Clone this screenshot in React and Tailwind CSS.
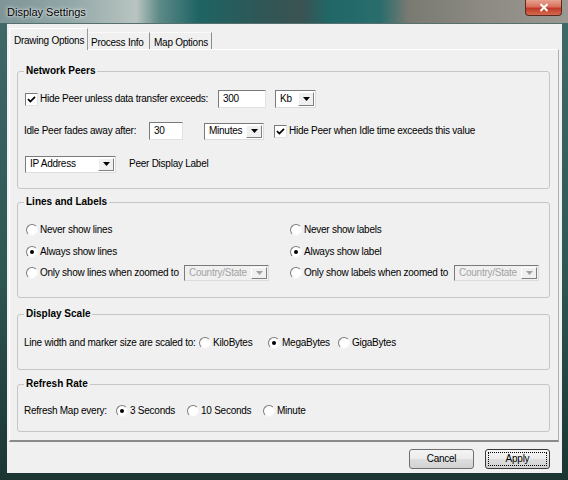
import React from "react";

const Check = () => (
  <span className="w-[13px] h-[13px] bg-white border border-t-[#7a7a7a] border-l-[#7a7a7a] border-r-[#e2e2e2] border-b-[#e2e2e2] flex items-center justify-center shrink-0">
    <svg width="9" height="9" viewBox="0 0 9 9">
      <path d="M1 4.2 L3.4 6.6 L8 1.8" stroke="#000" strokeWidth="1.7" fill="none" />
    </svg>
  </span>
);

const Radio = ({ on }) => (
  <span className="w-[12px] h-[12px] rounded-full bg-white border border-t-[#7a7a7a] border-l-[#7a7a7a] border-r-[#f4f4f4] border-b-[#f4f4f4] flex items-center justify-center shrink-0">
    {on && <span className="w-[4px] h-[4px] rounded-full bg-black" />}
  </span>
);

const Arrow = ({ disabled }) => (
  <span className="w-[16px] shrink-0 bg-[#f0f0f0] border border-t-white border-l-white border-r-[#808080] border-b-[#808080] flex items-center justify-center">
    <svg width="7" height="4" viewBox="0 0 7 4">
      <path d="M0 0 H7 L3.5 4 Z" fill={disabled ? "#a0a0a0" : "#000"} />
    </svg>
  </span>
);

const Select = ({ cls, text, disabled }) => (
  <div
    className={
      "flex items-stretch border border-t-[#7a7a7a] border-l-[#7a7a7a] border-r-[#dcdcdc] border-b-[#dcdcdc] p-[1px] shrink-0 " +
      (disabled ? "bg-[#f0f0f0] text-[#a3a3a3] " : "bg-white ") +
      cls
    }
  >
    <span className="flex-1 flex items-center pl-[3px] overflow-hidden whitespace-nowrap">{text}</span>
    <Arrow disabled={disabled} />
  </div>
);

const Input = ({ cls, text }) => (
  <div
    className={
      "bg-white border border-t-[#7a7a7a] border-l-[#7a7a7a] border-r-[#e2e2e2] border-b-[#e2e2e2] flex items-center pl-[4px] shrink-0 " +
      cls
    }
  >
    {text}
  </div>
);

const Group = ({ title, cls, children }) => (
  <div className={"relative ml-[7px] w-[533px] border border-[#c6c6c6] rounded-[3px] " + cls}>
    <span className="absolute left-[6px] -top-[7px] bg-[#f0f0f0] px-[2px] font-bold leading-[12px] tracking-normal">
      {title}
    </span>
    {children}
  </div>
);

const RadioItem = ({ on, label, cls }) => (
  <div className={"flex items-center gap-[2px] shrink-0 " + (cls || "")}>
    <Radio on={on} />
    <span className="whitespace-nowrap">{label}</span>
  </div>
);

export default function App() {
  return (
    <div className="w-[568px] h-[480px] relative overflow-hidden bg-[linear-gradient(180deg,#3f6b68_0%,#2f5855_55%,#1b3533_100%)] text-black font-['Liberation_Sans',Arial,sans-serif]">
      {/* title bar */}
      <div className="h-[23px] flex items-center pl-[7px] bg-[linear-gradient(90deg,#7e9597_0%,#91a7a7_12%,#b9c4c0_24%,#5e8a88_28%,#1f6464_35%,#2f5656_46%,#3b5252_53%,#206767_58%,#2a6d6d_67%,#7a7a72_72%,#8c8a82_85%,#9a9890_100%)]">
        <span className="text-[11px] leading-[14px] [text-shadow:0_0_5px_rgba(255,255,255,0.9),0_0_2px_rgba(255,255,255,0.9)]">
          Display Settings
        </span>
      </div>
      <div className="absolute top-0 left-[525px] w-[37px] h-[16px] rounded-b-[4px] border border-t-0 border-[#5a2a22] bg-[linear-gradient(180deg,#e8a292_0%,#d9705c_45%,#c03a26_55%,#d36a4e_100%)] flex items-center justify-center">
        <svg width="10" height="9" viewBox="0 0 10 9">
          <path d="M1.5 1 L8.5 8 M8.5 1 L1.5 8" stroke="#fff" strokeWidth="2" />
        </svg>
      </div>

      {/* client area */}
      <div className="ml-[7px] w-[555px] h-[450px] bg-[#f0f0f0] border-t border-[#55706f] flex flex-col text-[10px] leading-[12px] tracking-[-0.25px]">
        {/* tab strip */}
        <div className="flex items-end pl-[2px] pt-[3px] h-[25px]">
          <div className="h-[22px] w-[79px] -mb-[1px] relative z-10 bg-[#f0f0f0] border-t border-l border-white border-r border-r-[#9a9a9a] pl-[4px] pt-[6px]">
            Drawing Options
          </div>
          <div className="h-[17px] w-[62px] border-t border-t-[#fafafa] border-r border-r-[#8a8a8a] pl-[3px] pt-[4px]">
            Process Info
          </div>
          <div className="h-[17px] w-[62px] border-t border-t-[#fafafa] border-r border-r-[#8a8a8a] pl-[4px] pt-[4px]">
            Map Options
          </div>
        </div>

        {/* tab panel */}
        <div className="ml-[2px] w-[550px] h-[393px] border-t border-l border-white border-r border-r-[#b0b0b0] border-b-2 border-b-[#8a8a8a] flex flex-col">
          <Group title="Network Peers" cls="mt-[21px] h-[118px] pt-[18px]">
            <div className="h-[18px] flex items-center pl-[7px]">
              <div className="w-[193px] flex items-center gap-[2px] shrink-0">
                <Check />
                <span className="whitespace-nowrap">Hide Peer unless data transfer exceeds:</span>
              </div>
              <Input cls="w-[48px] h-[18px]" text="300" />
              <Select cls="ml-[9px] w-[41px] h-[18px]" text="Kb" />
            </div>
            <div className="mt-[14px] h-[18px] flex items-center pl-[6px]">
              <span className="w-[125px] shrink-0 whitespace-nowrap">Idle Peer fades away after:</span>
              <Input cls="w-[34px] h-[18px]" text="30" />
              <Select cls="ml-[21px] w-[60px] h-[17px]" text="Minutes" />
              <div className="ml-[10px] flex items-center gap-[2px]">
                <Check />
                <span className="whitespace-nowrap">Hide Peer when Idle time exceeds this value</span>
              </div>
            </div>
            <div className="mt-[15px] h-[18px] flex items-center pl-[7px]">
              <Select cls="w-[91px] h-[17px]" text="IP Address" />
              <span className="ml-[13px] whitespace-nowrap">Peer Display Label</span>
            </div>
          </Group>

          <Group title="Lines and Labels" cls="mt-[13px] h-[96px] pt-[18px] flex pl-[8px]">
            <div className="w-[264px] shrink-0 flex flex-col">
              <div className="h-[18px] flex items-center">
                <RadioItem label="Never show lines" />
              </div>
              <div className="mt-[4px] h-[18px] flex items-center">
                <RadioItem on label="Always show lines" />
              </div>
              <div className="mt-[3px] h-[18px] flex items-center">
                <RadioItem label="Only show lines when zoomed to" cls="w-[158px]" />
                <Select cls="w-[85px] h-[16px]" text="Country/State" disabled />
              </div>
            </div>
            <div className="flex flex-col">
              <div className="h-[18px] flex items-center">
                <RadioItem label="Never show labels" />
              </div>
              <div className="mt-[4px] h-[18px] flex items-center">
                <RadioItem on label="Always show label" />
              </div>
              <div className="mt-[3px] h-[18px] flex items-center">
                <RadioItem label="Only show labels when zoomed to" cls="w-[164px]" />
                <Select cls="w-[85px] h-[16px]" text="Country/State" disabled />
              </div>
            </div>
          </Group>

          <Group title="Display Scale" cls="mt-[16px] h-[56px] pt-[19px]">
            <div className="h-[18px] flex items-center pl-[6px]">
              <span className="w-[175px] shrink-0 whitespace-nowrap">Line width and marker size are scaled to:</span>
              <RadioItem label="KiloBytes" cls="w-[69px]" />
              <RadioItem on label="MegaBytes" cls="w-[70px]" />
              <RadioItem label="GigaBytes" />
            </div>
          </Group>

          <Group title="Refresh Rate" cls="mt-[14px] h-[48px] pt-[17px]">
            <div className="h-[18px] flex items-center pl-[6px]">
              <span className="w-[92px] shrink-0 whitespace-nowrap">Refresh Map every:</span>
              <RadioItem on label="3 Seconds" cls="w-[71px]" />
              <RadioItem label="10 Seconds" cls="w-[76px]" />
              <RadioItem label="Minute" />
            </div>
          </Group>
        </div>

        {/* buttons */}
        <div className="mt-[7px] flex justify-end gap-[11px] pr-[12px]">
          <div className="w-[65px] h-[20px] rounded-[3px] border border-[#707070] bg-[linear-gradient(180deg,#f4f4f4_0%,#ececec_50%,#dedede_50%,#d2d2d2_100%)] flex items-center justify-center">
            Cancel
          </div>
          <div className="w-[65px] h-[20px] rounded-[3px] border border-[#3a3a3a] bg-[linear-gradient(180deg,#f4f4f4_0%,#ececec_50%,#dedede_50%,#d2d2d2_100%)] p-[2px]">
            <div className="w-full h-full border border-dotted border-black flex items-center justify-center">
              Apply
            </div>
          </div>
        </div>
      </div>
    </div>
  );
}
